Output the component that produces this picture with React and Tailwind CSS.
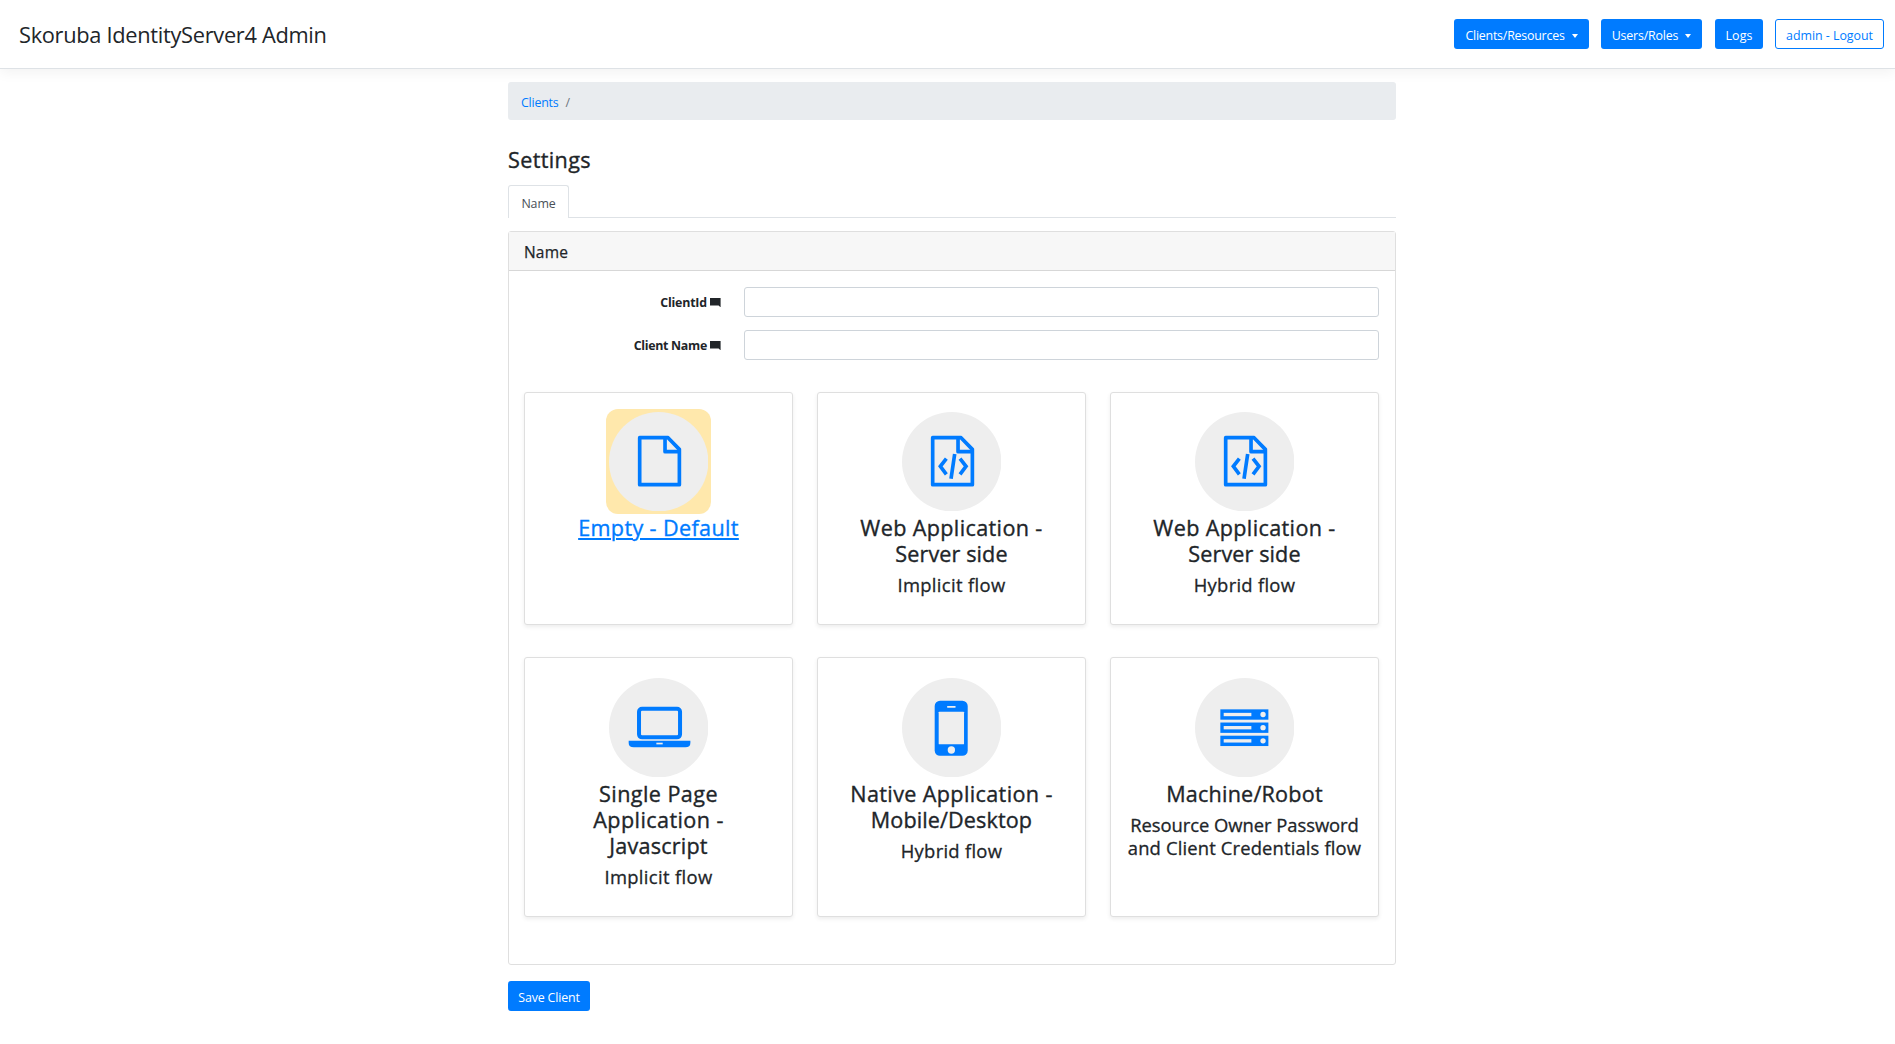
function Caret() {
  return <span className="mt-px ml-[7px] h-0 w-0 border-x-[3.5px] border-t-4 border-x-transparent border-t-white" />;
}

function Comment() {
  return (
    <svg viewBox="0 0 32 28" className="ml-[3.5px] h-[9.5px] w-[10.6px] shrink-0" fill="#212529">
      <path d="M0 0h32v28l-6-6H0z" />
    </svg>
  );
}

function FileShape() {
  return (
    <g fill="none" stroke="#007bff" strokeWidth="11" strokeLinejoin="round">
      <path d="M92 77h85l34 35v106H92z" />
      <path d="M168 77v42h42" />
    </g>
  );
}

function CodeFileShape() {
  return (
    <>
      <FileShape />
      <path
        d="M133 140l-18 23 18 24M158 126l-11 74M174 140l18 23-18 24"
        fill="none"
        stroke="#007bff"
        strokeWidth="11"
        strokeLinejoin="miter"
      />
    </>
  );
}

function LaptopShape() {
  return (
    <>
      <rect x="90" y="92" width="123" height="86" rx="9" fill="none" stroke="#007bff" strokeWidth="12" />
      <path d="M59 188h185v7q0 13-15 13H74q-15 0-15-13z" fill="#007bff" />
      <rect x="142" y="194" width="19" height="5" fill="#eee" />
    </>
  );
}

function PhoneShape() {
  return (
    <>
      <rect x="98" y="68" width="99" height="165" rx="16" fill="#007bff" />
      <rect x="110" y="101" width="76" height="98" rx="2" fill="#eee" />
      <rect x="135" y="84" width="26" height="5" rx="2" fill="#eee" />
      <circle cx="148" cy="216" r="11" fill="#eee" />
    </>
  );
}

function ServerShape() {
  return [94, 133.5, 173].map((y) => (
    <g key={y}>
      <rect x="76" y={y} width="144" height="31" fill="#007bff" />
      <rect x="86" y={y + 10.5} width="83" height="10" fill="#eee" />
      <circle cx="204" cy={y + 15.5} r="8" fill="#eee" />
    </g>
  ));
}

function Round({ children }) {
  return (
    <svg viewBox="0 0 298 298" className="block h-[99.4px] w-[99.4px]">
      <circle cx="149" cy="149" r="149" fill="#eee" />
      {children}
    </svg>
  );
}

const cards = [
  { shape: <FileShape />, title: [["Empty - Default", "tracking-[0.36px]"]], flow: [], selected: true },
  {
    shape: <CodeFileShape />,
    title: [["Web Application -", "tracking-[0.36px]"], ["Server side", "tracking-[0.1px]"]],
    flow: [["Implicit flow", "tracking-[0.35px]"]],
  },
  {
    shape: <CodeFileShape />,
    title: [["Web Application -", "tracking-[0.36px]"], ["Server side", "tracking-[0.1px]"]],
    flow: [["Hybrid flow", "tracking-[0.28px]"]],
  },
  {
    shape: <LaptopShape />,
    title: [["Single Page", "tracking-[0.42px]"], ["Application -", "tracking-[0.4px]"], ["Javascript", "tracking-[0.2px]"]],
    flow: [["Implicit flow", "tracking-[0.35px]"]],
    lower: true,
  },
  {
    shape: <PhoneShape />,
    title: [["Native Application -", "tracking-[0.36px]"], ["Mobile/Desktop", "tracking-[0.1px]"]],
    flow: [["Hybrid flow", "tracking-[0.28px]"]],
    lower: true,
  },
  {
    shape: <ServerShape />,
    title: [["Machine/Robot", "tracking-[0.2px]"]],
    flow: [["Resource Owner Password", "tracking-[-0.04px]"], ["and Client Credentials flow", "tracking-[0.15px]"]],
    lower: true,
  },
];

function Card({ shape, title, flow, selected, lower }) {
  return (
    <div
      className={`flex flex-col items-center rounded-[3px] border border-[#dfdfdf] bg-white shadow-[0_2px_4px_rgba(0,0,0,0.075)] ${lower ? "pt-[17px]" : "pt-4"}`}
    >
      <div className={selected ? "rounded-xl bg-[#ffe8ac] p-[2.8px]" : "p-[2.8px]"}>
        <Round>{shape}</Round>
      </div>
      <h4
        className={`mt-px flex flex-col items-center text-[21.6px] leading-[26px] font-medium [-webkit-text-stroke:0.35px] ${
          selected ? "text-[#007bff] underline decoration-2 underline-offset-2" : ""
        }`}
      >
        {title.map(([text, tracking]) => (
          <span key={text} className={tracking}>{text}</span>
        ))}
      </h4>
      <h5 className="mt-[6px] flex flex-col items-center text-[18.4px] leading-[23px] font-medium whitespace-nowrap [-webkit-text-stroke:0.3px]">
        {flow.map(([text, tracking]) => (
          <span key={text} className={tracking}>{text}</span>
        ))}
      </h5>
    </div>
  );
}

function Field({ label, tracking }) {
  return (
    <div className="flex h-[30px] items-center">
      <label className="flex w-[197px] items-center justify-end pt-px font-bold">
        <span className={tracking}>{label}</span>
        <Comment />
      </label>
      <input className="ml-[23px] h-[30px] w-[635px] rounded-[3px] border border-[#ced4da] bg-white px-2" />
    </div>
  );
}

export default function App() {
  return (
    <div className="h-[1044px] overflow-hidden bg-white font-['Open_Sans','Noto_Sans',sans-serif] text-[12.4px] leading-[19px] text-[#212529]">
      <nav className="flex h-[69px] items-center justify-between border-b border-[#dee2e6] bg-white pr-[11px] pl-[19px] shadow-[0_4px_12px_rgba(0,0,0,0.05)]">
        <a className="pt-0.5 text-[21.8px] leading-[34px] tracking-[-0.3px] text-[#212529]">Skoruba IdentityServer4 Admin</a>
        <div className="flex h-[30px] text-white">
          <button className="flex w-[135px] items-center justify-center rounded-[3px] bg-[#007bff] pt-0.5">
            <span className="tracking-[-0.22px]">Clients/Resources</span>
            <Caret />
          </button>
          <button className="ml-3 flex w-[101px] items-center justify-center rounded-[3px] bg-[#007bff] pt-0.5">
            <span className="tracking-[-0.16px]">Users/Roles</span>
            <Caret />
          </button>
          <button className="ml-[13px] w-12 rounded-[3px] bg-[#007bff] pt-0.5 tracking-[0.1px]">Logs</button>
          <button className="ml-3 w-[109px] rounded-[3px] border border-[#007bff] bg-white pt-0.5 tracking-[-0.03px] text-[#007bff]">
            admin - Logout
          </button>
        </div>
      </nav>

      <main className="ml-[508px] w-[888px]">
        <div className="mt-[13px] flex h-[38px] items-center rounded-[3px] bg-[#e9ecef] px-[13px] pt-[3px]">
          <a className="tracking-[-0.2px] text-[#007bff]">Clients</a>
          <span className="ml-[7px] text-[#6c757d]">/</span>
        </div>

        <h4 className="mt-[27px] text-[21.6px] leading-[26px] font-medium tracking-[0.35px] [-webkit-text-stroke:0.35px]">Settings</h4>

        <div className="mt-3 flex h-[33px] border-b border-[#dee2e6]">
          <div className="-mb-px flex w-[61px] items-center justify-center rounded-t-[3px] border border-b-0 border-[#dee2e6] bg-white pt-0.5 tracking-[-0.1px] text-[#495057]">
            Name
          </div>
        </div>

        <section className="mt-[13px] h-[734px] rounded-[3px] border border-[#dfdfdf]">
          <header className="flex h-[39px] items-center border-b border-[#d7d7d7] bg-[#f7f7f7] pt-0.5 pl-[15px] text-[15.5px] font-medium tracking-[0.2px] [-webkit-text-stroke:0.25px]">
            Name
          </header>
          <div className="px-[15px] pt-4">
            <div className="flex flex-col gap-[13px]">
              <Field label="ClientId" tracking="tracking-[-0.2px]" />
              <Field label="Client Name" tracking="tracking-[-0.3px]" />
            </div>
            <div className="mt-8 grid grid-cols-[269px_269px_269px] grid-rows-[233px_260px] gap-x-6 gap-y-8">
              {cards.map((card, i) => (
                <Card key={i} {...card} />
              ))}
            </div>
          </div>
        </section>

        <button className="mt-4 block h-[30px] w-[82px] rounded-[3px] bg-[#007bff] pt-0.5 tracking-[-0.16px] text-white">Save Client</button>
      </main>
    </div>
  );
}
